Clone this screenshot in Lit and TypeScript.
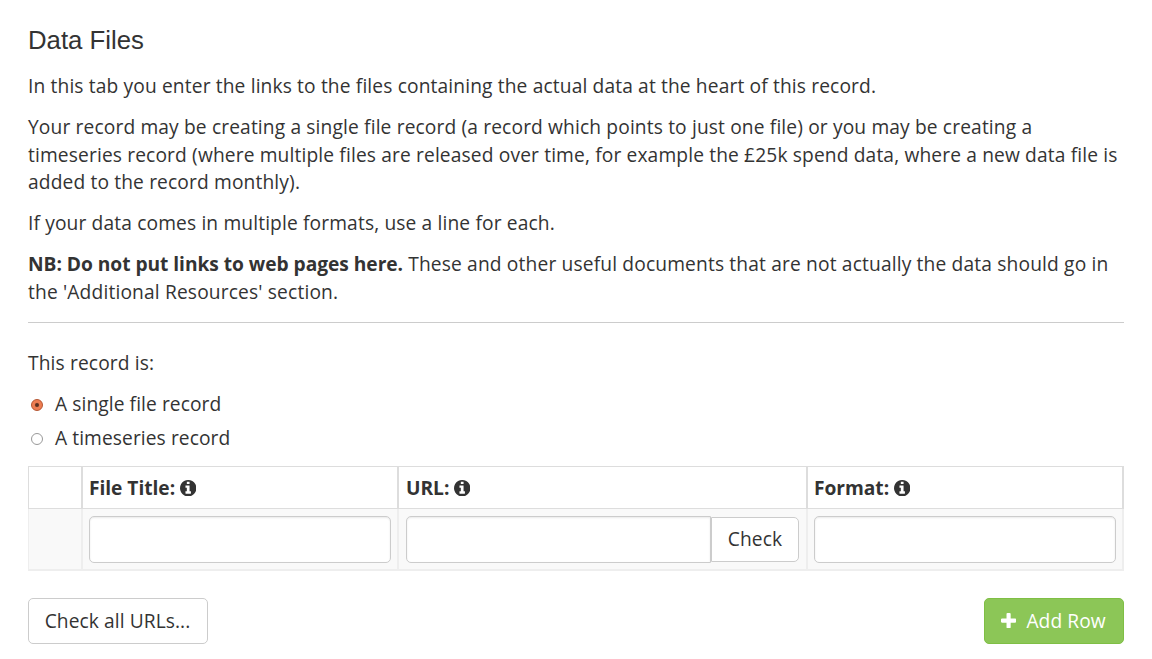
import { LitElement, html, css, svg } from "lit";
import { customElement } from "lit/decorators.js";

const infoIcon = html`<svg class="info" viewBox="128 128 1536 1536" aria-hidden="true">
  ${svg`<path d="M1152 1376v-160q0-14-9-23t-23-9h-96v-512q0-14-9-23t-23-9h-320q-14 0-23 9t-9 23v160q0 14 9 23t23 9h96v320h-96q-14 0-23 9t-9 23v160q0 14 9 23t23 9h448q14 0 23-9t9-23zm-128-896v-160q0-14-9-23t-23-9h-192q-14 0-23 9t-9 23v160q0 14 9 23t23 9h192q14 0 23-9t9-23zm640 416q0 209-103 385.5t-279.5 279.5-385.5 103-385.5-103-279.5-279.5-103-385.5 103-385.5 279.5-279.5 385.5-103 385.5 103 279.5 279.5 103 385.5z"/>`}
</svg>`;

const plusIcon = html`<svg class="plus" viewBox="192 128 1408 1408" aria-hidden="true">
  ${svg`<path d="M1600 736v192q0 40-28 68t-68 28h-416v416q0 40-28 68t-68 28h-192q-40 0-68-28t-28-68v-416h-416q-40 0-68-28t-28-68v-192q0-40 28-68t68-28h416v-416q0-40 28-68t68-28h192q40 0 68 28t28 68v416h416q40 0 68 28t28 68z"/>`}
</svg>`;

@customElement("app-root")
export class AppRoot extends LitElement {
  static styles = css`
    * { box-sizing: border-box; }
    :host {
      display: block;
      height: 659px;
      overflow: hidden;
      padding: 25px 28px 0;
      background: #fff;
      color: #333;
      font: 19.2px/27.5px "Open Sans", sans-serif;
    }
    h3 {
      margin: 0 0 17px;
      font: 400 25.75px/30px "Liberation Sans", sans-serif;
    }
    p { margin: 0 0 13.6px; letter-spacing: 0.134px; }
    p.long { letter-spacing: 0.136px; }
    p.note { letter-spacing: 0.152px; }
    b { letter-spacing: -0.04px; }
    hr { border: 0; border-top: 1px solid #ccc; margin: 17px 0 26.2px; }
    .option { display: flex; align-items: center; height: 27px; margin-bottom: 7px; letter-spacing: 0.08px; }
    .option input {
      appearance: none;
      width: 12px;
      height: 12px;
      margin: 2px 12px 0 3px;
      border: 1px solid #999;
      border-radius: 50%;
      background: #fff;
    }
    .option input:checked {
      border-color: #b5532f;
      background: radial-gradient(circle, #5a3020 0 1.4px, #ee7d52 2.6px);
    }
    .grid {
      display: grid;
      grid-template-columns: 55px 316px 409px 316px;
      grid-template-rows: 43px 62px;
      width: 1096px;
      margin-top: 14px;
    }
    .head, .cell { border-right: 2px solid #ddd; padding-left: 6px; }
    .head {
      border-top: 1px solid #ddd;
      border-bottom: 1px solid #ddd;
      padding-top: 1px;
      font-weight: 700;
      letter-spacing: -0.04px;
      display: flex;
      align-items: center;
    }
    .cell {
      display: flex;
      align-items: flex-start;
      padding: 7px 6px 0;
      background: #f9f9f9;
      border-right-color: #eee;
      border-bottom: 2px solid #eee;
    }
    .first { border-left: 1px solid #ddd; }
    .cell.first { border-left-color: #eee; }
    .head.url { padding-left: 7px; }
    .cell.url { padding: 7px 7px 0; }
    .info { width: 16.4px; height: 16.4px; margin: 1px 0 0 4.6px; fill: #333; }
    .field {
      flex: 1;
      min-width: 0;
      height: 47px;
      border: 1px solid #ccc;
      border-radius: 5px;
      background: #fff;
      box-shadow: inset 0 1px 2px rgba(0, 0, 0, 0.09);
      outline: 0;
    }
    .joined { border-radius: 5px 0 0 5px; }
    button {
      height: 46px;
      padding: 0 16px;
      border: 1px solid #ccc;
      border-radius: 5px;
      background: #fff;
      color: #333;
      font: inherit;
      letter-spacing: 0.08px;
      white-space: nowrap;
    }
    .check { height: 45px; width: 88px; margin-top: 1px; padding: 0; border-radius: 0 5px 5px 0; }
    .actions { display: flex; justify-content: space-between; margin-top: 27px; }
    .all { width: 180px; padding: 0 1px 0 0; }
    .add {
      display: flex;
      align-items: center;
      justify-content: center;
      width: 140px;
      padding: 0 1px 0 0;
      background: #8cc657;
      border-color: #7fbf45;
      color: #fff;
    }
    .plus { width: 15.2px; height: 15.2px; margin-right: 10px; fill: #fff; }
  `;

  render() {
    return html`
      <h3>Data Files</h3>
      <p>In this tab you enter the links to the files containing the actual data at the heart of this record.</p>
      <p class="long">Your record may be creating a single file record (a record which points to just one file) or you may be creating a<br />timeseries record (where multiple files are released over time, for example the £25k spend data, where a new data file is<br />added to the record monthly).</p>
      <p>If your data comes in multiple formats, use a line for each.</p>
      <p class="note"><b>NB: Do not put links to web pages here.</b> These and other useful documents that are not actually the data should go in the 'Additional Resources' section.</p>
      <hr />
      <p>This record is:</p>
      <label class="option"><input type="radio" name="kind" checked />A single file record</label>
      <label class="option"><input type="radio" name="kind" />A timeseries record</label>
      <div class="grid">
        <div class="head first"></div>
        <div class="head">File Title:${infoIcon}</div>
        <div class="head url">URL:${infoIcon}</div>
        <div class="head">Format:${infoIcon}</div>
        <div class="cell first"></div>
        <div class="cell"><input class="field" aria-label="File Title" /></div>
        <div class="cell url"><input class="field joined" aria-label="URL" /><button class="check">Check</button></div>
        <div class="cell"><input class="field" aria-label="Format" /></div>
      </div>
      <div class="actions">
        <button class="all">Check all URLs...</button>
        <button class="add">${plusIcon}Add Row</button>
      </div>
    `;
  }
}
